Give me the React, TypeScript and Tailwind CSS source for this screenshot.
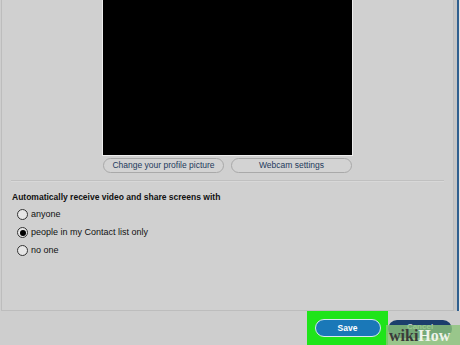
import React from 'react';

const font = { fontFamily: '"Liberation Sans", Arial, sans-serif' };

const Radio: React.FC<{ checked?: boolean; label: string }> = ({ checked, label }) => (
  <label className="flex items-center h-[18px] gap-[3px]">
    <span className="w-[11px] h-[11px] rounded-full border border-[#333] bg-[#e6e6e6] flex items-center justify-center">
      {checked && <span className="w-[6px] h-[6px] rounded-full bg-black" />}
    </span>
    <span className="text-[9px] text-[#111]">{label}</span>
  </label>
);

export default function App() {
  return (
    <div className="w-[460px] h-[345px] overflow-hidden bg-[#cecece] flex flex-col" style={font}>
      <div className="flex h-[311px]">
        {/* Settings panel */}
        <div className="w-[453px] ml-[1px] border-l border-r border-b border-[#bdbdbd] bg-[#d0d0d0] flex flex-col">
          <div className="mx-auto w-[251px] h-[156px] bg-black border-l border-r border-b border-[#ececec]" />

          <div className="flex justify-center gap-[7px] mt-[2px]">
            <button className="w-[121px] h-[15px] rounded-full border border-[#a9a9a9] bg-[#d3d3d3] text-[8.5px] text-[#1d3a5c]">
              Change your profile picture
            </button>
            <button className="w-[121px] h-[15px] rounded-full border border-[#a9a9a9] bg-[#d3d3d3] text-[8.5px] text-[#1d3a5c]">
              Webcam settings
            </button>
          </div>

          <div className="mx-[9px] mt-[7px] h-[2px] border-t border-[#c0c0c0] border-b border-b-[#d8d8d8]" />

          <div className="ml-[10px] mt-[9px] text-[8.5px] font-bold text-[#111]">
            Automatically receive video and share screens with
          </div>

          <div className="ml-[15px] mt-[2px] flex flex-col">
            <Radio label="anyone" />
            <Radio checked label="people in my Contact list only" />
            <Radio label="no one" />
          </div>
        </div>

        {/* Window edge */}
        <div className="flex">
          <div className="w-[3px] bg-[#c6c6c6]" />
          <div className="w-[2px] bg-[#2f5f8f]" />
          <div className="w-[1px] bg-[#e2e2e2]" />
        </div>
      </div>

      {/* Bottom bar */}
      <div className="relative flex-1 flex items-start">
        <div className="ml-[307px] w-[81px] h-[34px] bg-[#1fe41a] flex items-start justify-center pt-[8px]">
          <button className="w-[66px] h-[18px] rounded-full bg-[#1a78b8] border border-[#d8e8f0] text-white text-[8.5px] font-bold">
            Save
          </button>
        </div>
        <button className="mt-[9px] w-[64px] h-[18px] rounded-full bg-[#1b3e6c] text-[#c9d4de] text-[8px] font-bold leading-none flex justify-center pt-[3px]">
          Cancel
        </button>

        {/* watermark */}
        <div className="absolute left-[386px] top-[14px] w-[74px] h-[20px] bg-[#8cc47a]/80 flex items-end pl-[3px] pb-[1px]">
          <span className="text-[16px] font-bold leading-none" style={{ fontFamily: '"Liberation Serif", serif' }}>
            <span className="text-[#3a3a3a]">wiki</span>
            <span className="text-[#eef3ea]">How</span>
          </span>
        </div>
      </div>
    </div>
  );
}
